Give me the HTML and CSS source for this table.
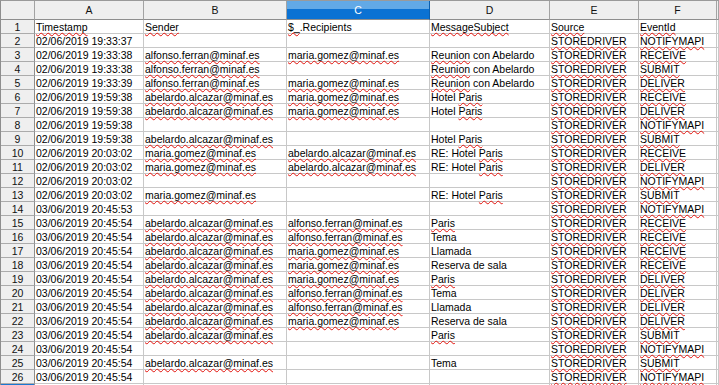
FILE: index.html
```html
<!DOCTYPE html>
<html>
<head>
<meta charset="utf-8">
<link rel="stylesheet" href="styles.css">
</head>
<body>
<div class="sheet">
  <div class="r">
    <div class="ch"></div><div class="ch">A</div><div class="ch">B</div><div class="ch sel">C</div><div class="ch">D</div><div class="ch">E</div><div class="ch">F</div><div class="ch"></div>
  </div>
  <div class="r">
    <div class="rh">1</div><div class="c"><span class="sp">Timestamp</span></div><div class="c"><span class="sp">Sender</span></div><div class="c"><span class="sp">$_</span>.Recipients</div><div class="c"><span class="sp">MessageSubject</span></div><div class="c"><span class="sp">Source</span></div><div class="c"><span class="sp">EventId</span></div><div class="c"></div>
  </div>
  <div class="r">
    <div class="rh">2</div><div class="c">02/06/2019 19:33:37</div><div class="c"></div><div class="c"></div><div class="c"></div><div class="c"><span class="sp">STOREDRIVER</span></div><div class="c"><span class="sp">NOTIFYMAPI</span></div><div class="c"></div>
  </div>
  <div class="r">
    <div class="rh">3</div><div class="c">02/06/2019 19:33:38</div><div class="c"><span class="sp">alfonso.ferran@minaf.es</span></div><div class="c"><span class="sp">maria.gomez@minaf.es</span></div><div class="c"><span class="sp">Reunion</span> con Abelardo</div><div class="c"><span class="sp">STOREDRIVER</span></div><div class="c"><span class="sp">RECEIVE</span></div><div class="c"></div>
  </div>
  <div class="r">
    <div class="rh">4</div><div class="c">02/06/2019 19:33:38</div><div class="c"><span class="sp">alfonso.ferran@minaf.es</span></div><div class="c"></div><div class="c"><span class="sp">Reunion</span> con Abelardo</div><div class="c"><span class="sp">STOREDRIVER</span></div><div class="c"><span class="sp">SUBMIT</span></div><div class="c"></div>
  </div>
  <div class="r">
    <div class="rh">5</div><div class="c">02/06/2019 19:33:39</div><div class="c"><span class="sp">alfonso.ferran@minaf.es</span></div><div class="c"><span class="sp">maria.gomez@minaf.es</span></div><div class="c"><span class="sp">Reunion</span> con Abelardo</div><div class="c"><span class="sp">STOREDRIVER</span></div><div class="c"><span class="sp">DELIVER</span></div><div class="c"></div>
  </div>
  <div class="r">
    <div class="rh">6</div><div class="c">02/06/2019 19:59:38</div><div class="c"><span class="sp">abelardo.alcazar@minaf.es</span></div><div class="c"><span class="sp">maria.gomez@minaf.es</span></div><div class="c">Hotel <span class="sp">Paris</span></div><div class="c"><span class="sp">STOREDRIVER</span></div><div class="c"><span class="sp">RECEIVE</span></div><div class="c"></div>
  </div>
  <div class="r">
    <div class="rh">7</div><div class="c">02/06/2019 19:59:38</div><div class="c"><span class="sp">abelardo.alcazar@minaf.es</span></div><div class="c"><span class="sp">maria.gomez@minaf.es</span></div><div class="c">Hotel <span class="sp">Paris</span></div><div class="c"><span class="sp">STOREDRIVER</span></div><div class="c"><span class="sp">DELIVER</span></div><div class="c"></div>
  </div>
  <div class="r">
    <div class="rh">8</div><div class="c">02/06/2019 19:59:38</div><div class="c"></div><div class="c"></div><div class="c"></div><div class="c"><span class="sp">STOREDRIVER</span></div><div class="c"><span class="sp">NOTIFYMAPI</span></div><div class="c"></div>
  </div>
  <div class="r">
    <div class="rh">9</div><div class="c">02/06/2019 19:59:38</div><div class="c"><span class="sp">abelardo.alcazar@minaf.es</span></div><div class="c"></div><div class="c">Hotel <span class="sp">Paris</span></div><div class="c"><span class="sp">STOREDRIVER</span></div><div class="c"><span class="sp">SUBMIT</span></div><div class="c"></div>
  </div>
  <div class="r">
    <div class="rh">10</div><div class="c">02/06/2019 20:03:02</div><div class="c"><span class="sp">maria.gomez@minaf.es</span></div><div class="c"><span class="sp">abelardo.alcazar@minaf.es</span></div><div class="c">RE: Hotel <span class="sp">Paris</span></div><div class="c"><span class="sp">STOREDRIVER</span></div><div class="c"><span class="sp">RECEIVE</span></div><div class="c"></div>
  </div>
  <div class="r">
    <div class="rh">11</div><div class="c">02/06/2019 20:03:02</div><div class="c"><span class="sp">maria.gomez@minaf.es</span></div><div class="c"><span class="sp">abelardo.alcazar@minaf.es</span></div><div class="c">RE: Hotel <span class="sp">Paris</span></div><div class="c"><span class="sp">STOREDRIVER</span></div><div class="c"><span class="sp">DELIVER</span></div><div class="c"></div>
  </div>
  <div class="r">
    <div class="rh">12</div><div class="c">02/06/2019 20:03:02</div><div class="c"></div><div class="c"></div><div class="c"></div><div class="c"><span class="sp">STOREDRIVER</span></div><div class="c"><span class="sp">NOTIFYMAPI</span></div><div class="c"></div>
  </div>
  <div class="r">
    <div class="rh">13</div><div class="c">02/06/2019 20:03:02</div><div class="c"><span class="sp">maria.gomez@minaf.es</span></div><div class="c"></div><div class="c">RE: Hotel <span class="sp">Paris</span></div><div class="c"><span class="sp">STOREDRIVER</span></div><div class="c"><span class="sp">SUBMIT</span></div><div class="c"></div>
  </div>
  <div class="r">
    <div class="rh">14</div><div class="c">03/06/2019 20:45:53</div><div class="c"></div><div class="c"></div><div class="c"></div><div class="c"><span class="sp">STOREDRIVER</span></div><div class="c"><span class="sp">NOTIFYMAPI</span></div><div class="c"></div>
  </div>
  <div class="r">
    <div class="rh">15</div><div class="c">03/06/2019 20:45:54</div><div class="c"><span class="sp">abelardo.alcazar@minaf.es</span></div><div class="c"><span class="sp">alfonso.ferran@minaf.es</span></div><div class="c"><span class="sp">Paris</span></div><div class="c"><span class="sp">STOREDRIVER</span></div><div class="c"><span class="sp">RECEIVE</span></div><div class="c"></div>
  </div>
  <div class="r">
    <div class="rh">16</div><div class="c">03/06/2019 20:45:54</div><div class="c"><span class="sp">abelardo.alcazar@minaf.es</span></div><div class="c"><span class="sp">alfonso.ferran@minaf.es</span></div><div class="c">Tema</div><div class="c"><span class="sp">STOREDRIVER</span></div><div class="c"><span class="sp">RECEIVE</span></div><div class="c"></div>
  </div>
  <div class="r">
    <div class="rh">17</div><div class="c">03/06/2019 20:45:54</div><div class="c"><span class="sp">abelardo.alcazar@minaf.es</span></div><div class="c"><span class="sp">maria.gomez@minaf.es</span></div><div class="c">Llamada</div><div class="c"><span class="sp">STOREDRIVER</span></div><div class="c"><span class="sp">RECEIVE</span></div><div class="c"></div>
  </div>
  <div class="r">
    <div class="rh">18</div><div class="c">03/06/2019 20:45:54</div><div class="c"><span class="sp">abelardo.alcazar@minaf.es</span></div><div class="c"><span class="sp">maria.gomez@minaf.es</span></div><div class="c">Reserva de sala</div><div class="c"><span class="sp">STOREDRIVER</span></div><div class="c"><span class="sp">RECEIVE</span></div><div class="c"></div>
  </div>
  <div class="r">
    <div class="rh">19</div><div class="c">03/06/2019 20:45:54</div><div class="c"><span class="sp">abelardo.alcazar@minaf.es</span></div><div class="c"><span class="sp">maria.gomez@minaf.es</span></div><div class="c"><span class="sp">Paris</span></div><div class="c"><span class="sp">STOREDRIVER</span></div><div class="c"><span class="sp">DELIVER</span></div><div class="c"></div>
  </div>
  <div class="r">
    <div class="rh">20</div><div class="c">03/06/2019 20:45:54</div><div class="c"><span class="sp">abelardo.alcazar@minaf.es</span></div><div class="c"><span class="sp">alfonso.ferran@minaf.es</span></div><div class="c">Tema</div><div class="c"><span class="sp">STOREDRIVER</span></div><div class="c"><span class="sp">DELIVER</span></div><div class="c"></div>
  </div>
  <div class="r">
    <div class="rh">21</div><div class="c">03/06/2019 20:45:54</div><div class="c"><span class="sp">abelardo.alcazar@minaf.es</span></div><div class="c"><span class="sp">alfonso.ferran@minaf.es</span></div><div class="c">Llamada</div><div class="c"><span class="sp">STOREDRIVER</span></div><div class="c"><span class="sp">DELIVER</span></div><div class="c"></div>
  </div>
  <div class="r">
    <div class="rh">22</div><div class="c">03/06/2019 20:45:54</div><div class="c"><span class="sp">abelardo.alcazar@minaf.es</span></div><div class="c"><span class="sp">maria.gomez@minaf.es</span></div><div class="c">Reserva de sala</div><div class="c"><span class="sp">STOREDRIVER</span></div><div class="c"><span class="sp">DELIVER</span></div><div class="c"></div>
  </div>
  <div class="r">
    <div class="rh">23</div><div class="c">03/06/2019 20:45:54</div><div class="c"><span class="sp">abelardo.alcazar@minaf.es</span></div><div class="c"></div><div class="c"><span class="sp">Paris</span></div><div class="c"><span class="sp">STOREDRIVER</span></div><div class="c"><span class="sp">SUBMIT</span></div><div class="c"></div>
  </div>
  <div class="r">
    <div class="rh">24</div><div class="c">03/06/2019 20:45:54</div><div class="c"></div><div class="c"></div><div class="c"></div><div class="c"><span class="sp">STOREDRIVER</span></div><div class="c"><span class="sp">NOTIFYMAPI</span></div><div class="c"></div>
  </div>
  <div class="r">
    <div class="rh">25</div><div class="c">03/06/2019 20:45:54</div><div class="c"><span class="sp">abelardo.alcazar@minaf.es</span></div><div class="c"></div><div class="c">Tema</div><div class="c"><span class="sp">STOREDRIVER</span></div><div class="c"><span class="sp">SUBMIT</span></div><div class="c"></div>
  </div>
  <div class="r">
    <div class="rh">26</div><div class="c">03/06/2019 20:45:54</div><div class="c"></div><div class="c"></div><div class="c"></div><div class="c"><span class="sp">STOREDRIVER</span></div><div class="c"><span class="sp">NOTIFYMAPI</span></div><div class="c"></div>
  </div>
  <div class="r">
    <div class="rh cur"></div><div class="c"></div><div class="c"></div><div class="c"></div><div class="c"></div><div class="c"></div><div class="c"></div><div class="c"></div>
  </div>
</div>
</body>
</html>
```

FILE: styles.css
```css
html, body {
  margin: 0;
  padding: 0;
  background: #ffffff;
  overflow: hidden;
}

.sheet {
  display: grid;
  grid-template-columns: 34px 109px 143px 143px 120px 89px 78px 1fr;
  grid-template-rows: 19px;
  grid-auto-rows: 14px;
  width: 719px;
  height: 385px;
  overflow: hidden;
  box-sizing: border-box;
  border-left: 1px solid #8e8e8e;
  border-top: 1px solid #9a9a9a;
  background: #ffffff;
  font-family: "Liberation Sans", Arial, sans-serif;
  font-size: 10.5px;
  color: #000000;
}

.r {
  display: contents;
}

.ch {
  box-sizing: border-box;
  background: #efefef;
  border-right: 1px solid #a3a3a3;
  border-bottom: 1px solid #8e8e8e;
  text-align: center;
  line-height: 18px;
  color: #111111;
}

.ch.sel {
  background: linear-gradient(to bottom, #62a9e6 0, #62a9e6 45%, #0b72d3 45%, #0b72d3 100%);
  color: #ffffff;
  border-right-color: #0a5fb0;
}

.rh {
  box-sizing: border-box;
  background: #efefef;
  border-right: 1px solid #8e8e8e;
  border-bottom: 1px solid #ababab;
  text-align: center;
  padding-top: 1px;
  line-height: 13px;
  color: #111111;
}

.rh.cur {
  background: #1a78d2;
}

.c {
  box-sizing: border-box;
  border-right: 1px solid #c8c8c8;
  border-bottom: 1px solid #c8c8c8;
  padding: 1px 0 0 1px;
  line-height: 13px;
  white-space: nowrap;
}

.sp {
  text-decoration: underline wavy #e3120b;
  text-decoration-thickness: 1px;
  text-underline-offset: 1px;
  text-decoration-skip-ink: none;
}
```
